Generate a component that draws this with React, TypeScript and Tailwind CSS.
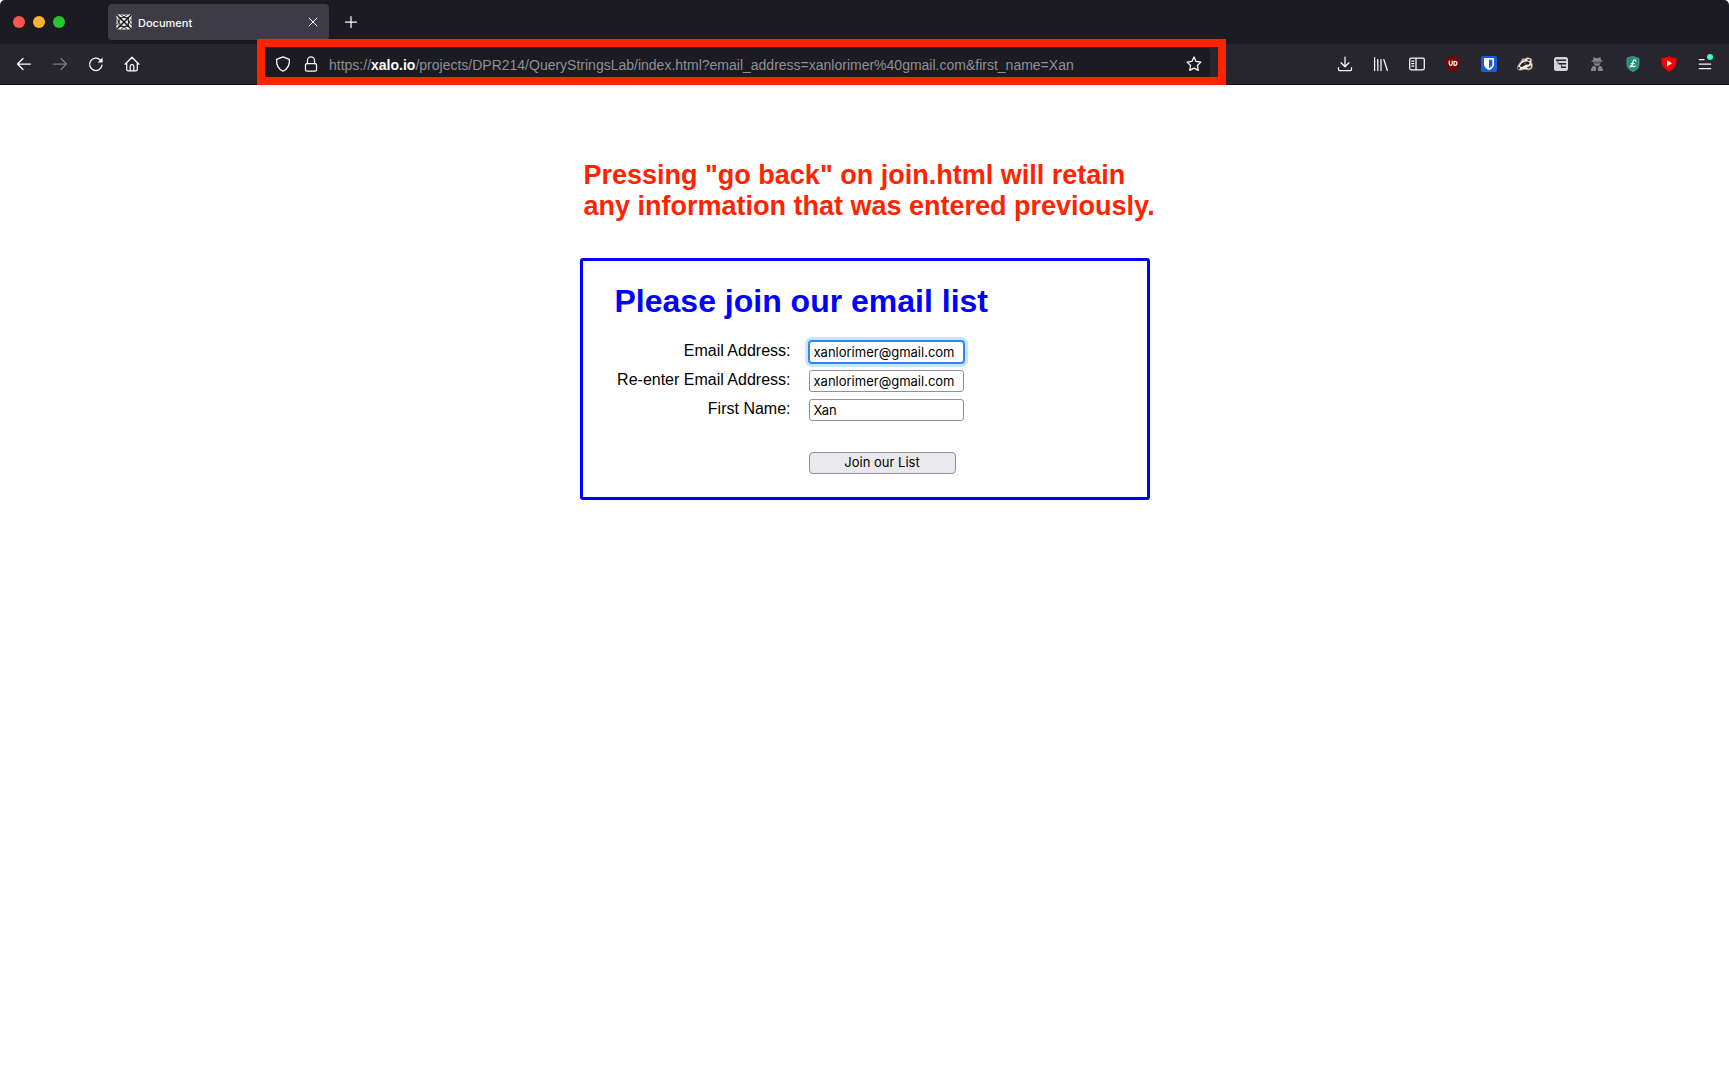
import React from 'react';

const svg = {
  width: 16,
  height: 16,
  viewBox: '0 0 16 16',
  fill: 'none',
  stroke: 'currentColor',
  strokeWidth: 1.25,
  strokeLinecap: 'round' as const,
  strokeLinejoin: 'round' as const,
  'aria-hidden': true,
};

const Back = () => (
  <svg {...svg}><path d="M14.5 8H1.5M7 2.5 1.5 8 7 13.5" /></svg>
);
const Forward = () => (
  <svg {...svg}><path d="M1.5 8h13M9 2.5 14.500 8 9 13.5" /></svg>
);
const Reload = () => (
  <svg {...svg}>
    <path d="M14 9.200A6.200 6.200 0 1 1 12.300 4" />
    <path d="M14.600 1.500v5h-5z" fill="currentColor" stroke="none" />
  </svg>
);
const Home = () => (
  <svg {...svg}>
    <path d="M1 8.200 8 1.200l7 7M2.700 6.800v6.700a1.300 1.300 0 0 0 1.300 1.300h8a1.300 1.300 0 0 0 1.300-1.300V6.800" />
    <path d="M6.200 14.500v-4a1.800 1.800 0 0 1 3.600 0v4" />
  </svg>
);
const Shield = () => (
  <svg {...svg}><path d="M8 .8 14.400 3.300c.3 5-1.400 9.700-6.400 12C3 13 1.300 8.300 1.600 3.300z" /></svg>
);
const Lock = () => (
  <svg {...svg}>
    <rect x="2.500" y="7.500" width="11" height="7.500" rx="1.300" />
    <path d="M4.500 7.500V4.300a3.500 3.500 0 0 1 7 0v3.200" />
  </svg>
);
const Star = () => (
  <svg {...svg}>
    <path d="m8 1 2.100 4.400 4.800.7-3.500 3.400.9 4.900L8 12.100l-4.300 2.300.9-4.900L1.100 6.100l4.800-.7z" />
  </svg>
);
const Download = () => (
  <svg {...svg}><path d="M8 1v9.500M4 6.800l4 4 4-4M1.500 11.500v2a1 1 0 0 0 1 1h11a1 1 0 0 0 1-1v-2" /></svg>
);
const Library = () => (
  <svg {...svg}><path d="M1.600 1.500v13M4.800 3.500v11M8 3.500v11M10.800 3.500l3.600 11" /></svg>
);
const Sidebar = () => (
  <svg {...svg}>
    <rect x=".7" y="2.200" width="14.600" height="11.600" rx="1.500" />
    <path d="M7 2.500v11M2.800 5h2M2.800 7.500h2M2.800 10h2" />
  </svg>
);
const Blocker = () => (
  <svg {...svg} stroke="none">
    <path d="M8 0c2 1.500 4.500 2 7 2 0 7-1.500 11-7 14C2.500 13 1 9 1 2c2.500 0 5-.5 7-2z" fill="#800000" />
    <path d="M4.200 5.200v2.600a1.500 1.500 0 0 0 3 0V5.200M9 9.300V5.300h.9a2 2 0 0 1 0 4z" stroke="#fff" strokeWidth="1.200" />
  </svg>
);
const Vault = () => (
  <svg {...svg} stroke="none">
    <rect width="16" height="16" rx="2" fill="#175ddc" />
    <path d="M3 2h10v6.500c0 2.500-2.500 4.500-5 5.700-2.500-1.200-5-3.200-5-5.700z" fill="#fff" />
    <path d="M8 3.700h3.400v4.800c0 1.500-1.600 2.900-3.400 3.900z" fill="#175ddc" />
  </svg>
);
const Badger = () => (
  <svg {...svg} stroke="none">
    <path d="M.4 11.200 2 8l2-2.500L5.500 2.800 8 3l1.500-1.200 3 .2 2.500 1.600-.7 2.400L15.600 9l-.8 3.500-3 1.500-4.300-.6-4.500.9L.6 13z" fill="#f6ece4" stroke="#b98262" strokeWidth=".8" />
    <path d="M3.200 9.500 5 7l3-1.200 3-.2 2 1.400-1.500 1.500-3 .3-2.500 1.700-2.500.5z" fill="#1d1d1f" />
    <path d="M9.500 3.800 12.500 3l1 1.400-1.500.8zM9.500 11.500l2.500-1 2-1.500-.3 2.700-2.200 1z" fill="#3a3532" />
    <path d="M5.600 4.600 7.500 4M7 7.800l2-.8" stroke="#8d8780" strokeWidth=".8" />
    <circle cx="1.900" cy="12" r="1.100" fill="#1d1d1f" />
  </svg>
);
const Notes = () => (
  <svg {...svg} stroke="none">
    <rect x="1" y="1" width="14" height="14" rx="2.500" fill="#d4d4d8" />
    <path d="M3 4.200h10M6 7.800h7M8 11.300h5" stroke="#25242c" strokeWidth="1.500" strokeLinecap="butt" />
    <path d="M5 4.200v3.600h2M8.500 7.800v3.500" stroke="#25242c" strokeWidth=".7" />
  </svg>
);
const Agent = () => (
  <svg {...svg} stroke="none" fill="#86858b">
    <path d="M4.500 1 6.500 2h3l2-1 .5 3.200 1.500.6v.9h-11v-.9L4 4.200z" />
    <path d="M4.500 6.200h7C11.500 8.500 10 10 8 10S4.500 8.500 4.500 6.200z" />
    <path d="M2 15c0-3 1-4.800 3.500-5.300L7.300 12 6.800 15zM14 15c0-3-1-4.800-3.500-5.300L8.700 12l.5 3z" />
    <path d="M5.700 7h1.600M8.700 7h1.600" stroke="#2b2a33" strokeWidth=".9" />
  </svg>
);
const Coin = () => (
  <svg {...svg} stroke="none">
    <path d="M8 .5 14 2.500v5.500c0 3.800-2.500 6.200-6 7.500-3.500-1.300-6-3.700-6-7.500V2.500z" fill="#1f8f7b" stroke="#69b5a7" strokeWidth=".7" />
    <path d="M10.800 5.200c.2-1.800-2.300-1.900-2.700.2L7.200 9c-.4 1.500-1.400 2-2.200 1.600.5-1 1.600-.8 2.600-.3 1 .6 2 .5 2.600-.4M6.200 7.700h3" stroke="#fff" strokeWidth="1.200" />
  </svg>
);
const Play = () => (
  <svg {...svg} stroke="none">
    <path d="M8 .5c2.500 1 5 1.500 7.600 1.600C15.800 8.500 13 13.500 8 15.600 3 13.500.2 8.500.4 2.100 3 2 5.500 1.500 8 .5z" fill="#f00" stroke="#9f1018" strokeWidth=".8" />
    <path d="M6 4.200v6.200l5-3.100z" fill="#fff" />
  </svg>
);
const Menu = () => (
  <svg {...svg}><path d="M2.300 3.500h4.700M2.300 8h11.400M2.300 12.500h11.400" /></svg>
);
const Cross = () => (
  <svg {...svg} strokeWidth={1}><path d="m4 4 8 8M12 4l-8 8" /></svg>
);
const Plus = () => (
  <svg {...svg}><path d="M8 2.500v11M2.500 8h11" /></svg>
);
const Favicon = () => (
  <svg {...svg} stroke="none">
    <rect width="16" height="16" fill="#e4e4de" />
    <path d="M0 0l16 16M16 0 0 16" stroke="#111" strokeWidth="1.300" />
    <path d="M3.500 3.500h9v9h-9zM8 2.500 13.500 8 8 13.500 2.500 8zM5 .7 8 3 11 .7M5 15.300 8 13l3 2.300M.7 5 3 8 .7 11M15.300 5 13 8l2.300 3" stroke="#111" strokeWidth=".8" />
    <rect x=".4" y=".4" width="15.200" height="15.200" stroke="#55544f" strokeWidth=".8" strokeDasharray="2 1.500" />
  </svg>
);

const extensions: [string, React.FC][] = [
  ['Downloads', Download],
  ['Library', Library],
  ['Sidebars', Sidebar],
  ['Ad blocker', Blocker],
  ['Password vault', Vault],
  ['Tracker blocker', Badger],
  ['Notes', Notes],
  ['User agent', Agent],
  ['Savings', Coin],
  ['Video enhancer', Play],
];

function ToolButton({ label, dim, children }: { label: string; dim?: boolean; children: React.ReactNode }) {
  return (
    <button
      aria-label={label}
      disabled={dim}
      className="relative flex h-8 w-9 shrink-0 items-center justify-center disabled:opacity-40"
    >
      {children}
    </button>
  );
}

function TabStrip() {
  return (
    <div className="flex h-11 items-center rounded-t-[5px] bg-[#1c1b22]">
      <div className="flex w-[108px] gap-2 pl-[13px]">
        <button aria-label="Close window" className="size-3 rounded-full bg-[#ff5750]" />
        <button aria-label="Minimize window" className="size-3 rounded-full bg-[#ffb529]" />
        <button aria-label="Zoom window" className="size-3 rounded-full bg-[#26c636]" />
      </div>
      <div className="flex h-9 w-[221px] items-center rounded bg-[#3d3b45] pr-2 pl-2 shadow-sm">
        <Favicon />
        <span className="ml-1.5 flex-1 pt-0.5 text-[11px] font-medium">Document</span>
        <button aria-label="Close tab"><Cross /></button>
      </div>
      <button aria-label="New tab" className="ml-[14px]"><Plus /></button>
    </div>
  );
}

function Toolbar() {
  return (
    <div className="flex h-[41px] items-center border-b border-[#0c0c0d] bg-[#27252e] px-1.5">
      <ToolButton label="Back"><Back /></ToolButton>
      <ToolButton label="Forward" dim><Forward /></ToolButton>
      <ToolButton label="Reload"><Reload /></ToolButton>
      <ToolButton label="Home"><Home /></ToolButton>
      <div className="flex-[107]" />
      <div className="relative flex h-10 flex-[944] items-center pr-4 pl-[9px]">
        <div className="flex h-8 w-full items-center rounded bg-[#1c1b22] pr-2 pl-[9px]">
          <Shield />
          <span className="ml-3"><Lock /></span>
          <p className="ml-2.5 flex-1 pt-0.5 font-['Liberation_Sans',Arial,sans-serif] text-sm whitespace-nowrap text-[#8f8f94]">
            https://<span className="font-bold text-[#fbfbfe]">xalo.io</span>
            /projects/DPR214/QueryStringsLab/index.html?email_address=xanlorimer%40gmail.com&amp;first_name=Xan
          </p>
          <button aria-label="Bookmark this page"><Star /></button>
        </div>
        <div className="pointer-events-none absolute inset-x-0 -top-[5px] -bottom-px border-8 border-[#ff2300]" />
      </div>
      <div className="flex-[101]" />
      {extensions.map(([label, Icon]) => (
        <ToolButton key={label} label={label}><Icon /></ToolButton>
      ))}
      <ToolButton label="Menu">
        <Menu />
        <span className="absolute top-1.5 right-2.5 size-1.5 rounded-full bg-[#3fffb0]" />
      </ToolButton>
    </div>
  );
}

function Field({ id, label, value, focused }: { id: string; label: string; value: string; focused?: boolean }) {
  return (
    <div className="flex">
      <label htmlFor={id} className="w-44 text-right text-base leading-5">{label}</label>
      <input
        id={id}
        defaultValue={value}
        className={
          'ml-[18px] h-[22px] w-[155px] rounded-[3px] border bg-white px-1 font-[Inter,sans-serif] text-[13px] outline-none ' +
          (focused
            ? 'border-[#3484f0] shadow-[0_0_0_1px_#3484f0,0_0_0_4px_#c5e6ff]'
            : 'border-[#8f8f9d]')
        }
      />
    </div>
  );
}

export default function App() {
  return (
    <div className="min-h-screen bg-white font-['Liberation_Sans',Arial,sans-serif] text-black">
      <header className="font-[Inter,sans-serif] text-[#fbfbfe]">
        <TabStrip />
        <Toolbar />
      </header>
      <main className="mx-auto w-[570px] pt-[75px]">
        <p className="pl-1 text-[27px] leading-[31px] font-bold whitespace-nowrap text-[#ff2300]">
          Pressing "go back" on join.html will retain
          <br />
          any information that was entered previously.
        </p>
        <form
          className="mt-9 rounded-[3px] border-[3px] border-[#0000ff] px-8 pt-[22px] pb-[23px]"
          onSubmit={(e) => e.preventDefault()}
        >
          <h1 className="text-[32px] leading-9 font-bold text-[#0000ff]">Please join our email list</h1>
          <div className="mt-[22px] flex flex-col gap-[7px]">
            <Field id="email" label="Email Address:" value="xanlorimer@gmail.com" focused />
            <Field id="email2" label="Re-enter Email Address:" value="xanlorimer@gmail.com" />
            <Field id="first" label="First Name:" value="Xan" />
          </div>
          <button className="mt-[31px] ml-[194px] flex h-[22px] w-[147px] items-center justify-center rounded border border-[#8f8f9d] bg-[#e9e9ed] font-[Inter,sans-serif] text-[13px]">
            Join our List
          </button>
        </form>
      </main>
    </div>
  );
}
